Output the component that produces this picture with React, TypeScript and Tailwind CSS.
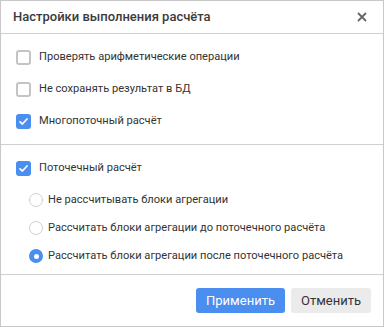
import React from "react";

function Check({ checked, label }: { checked?: boolean; label: string }) {
  return (
    <div className="flex h-5 items-center">
      <div className="ml-[15px] flex h-[15px] w-[15px] items-center justify-center">
        {checked ? (
          <div className="flex h-[15px] w-[15px] items-center justify-center rounded-[3px] bg-[#4a8ef0]">
            <svg width="11" height="11" viewBox="0 0 11 11">
              <path d="M2 5.8 L4.4 8 L9 3" fill="none" stroke="white" strokeWidth="1.7" strokeLinecap="round" strokeLinejoin="round" />
            </svg>
          </div>
        ) : (
          <div className="h-[15px] w-[15px] rounded-[3px] border-2 border-[#c4c4c4] bg-white" />
        )}
      </div>
      <span className="ml-[8px] text-[11.1px] text-[#333]">{label}</span>
    </div>
  );
}

function Radio({ checked, label }: { checked?: boolean; label: string }) {
  return (
    <div className="flex h-5 items-center">
      <div className="ml-[28px] flex h-[14px] w-[14px] items-center justify-center">
        {checked ? (
          <div className="flex h-[14px] w-[14px] items-center justify-center rounded-full bg-[#4a8ef0]">
            <div className="h-[5px] w-[5px] rounded-full bg-white" />
          </div>
        ) : (
          <div className="h-[14px] w-[14px] rounded-full border border-[#d0d0d0] bg-white" />
        )}
      </div>
      <span className="ml-[5px] whitespace-nowrap text-[11.1px] text-[#333]">{label}</span>
    </div>
  );
}

export default function App() {
  return (
    <div
      className="flex h-[327px] w-[384px] flex-col border border-[#c8c8c8] bg-white"
      style={{ fontFamily: "Roboto, 'Noto Sans', sans-serif" }}
    >
      <div className="flex h-[33px] shrink-0 items-center justify-between border-b border-[#d0d0d0] pl-3 pr-[16px]">
        <span className="text-[13px] font-medium text-[#3b3b3b]">Настройки выполнения расчёта</span>
        <svg width="10" height="10" viewBox="0 0 10 10">
          <path d="M1 1 L9 9 M9 1 L1 9" stroke="#666" strokeWidth="1.8" />
        </svg>
      </div>
      <div className="flex flex-col gap-3 border-b border-[#d0d0d0] py-[13px]">
        <Check label="Проверять арифметические операции" />
        <Check label="Не сохранять результат в БД" />
        <Check checked label="Многопоточный расчёт" />
      </div>
      <div className="flex flex-col border-b border-[#d0d0d0] pb-[8px] pt-[13px]">
        <Check checked label="Поточечный расчёт" />
        <div className="mt-[12px] flex flex-col gap-[8px]">
          <Radio label="Не рассчитывать блоки агрегации" />
          <Radio label="Рассчитать блоки агрегации до поточечного расчёта" />
          <Radio checked label="Рассчитать блоки агрегации после поточечного расчёта" />
        </div>
      </div>
      <div className="flex flex-1 items-start justify-end gap-[6px] pr-3 pt-[13px]">
        <button className="h-[25px] w-[89px] rounded-[3px] bg-[#4a8ef0] text-[13px] text-white">Применить</button>
        <button className="h-[25px] w-[80px] rounded-[3px] bg-[#ebebeb] text-[13px] text-[#333]">Отменить</button>
      </div>
    </div>
  );
}
